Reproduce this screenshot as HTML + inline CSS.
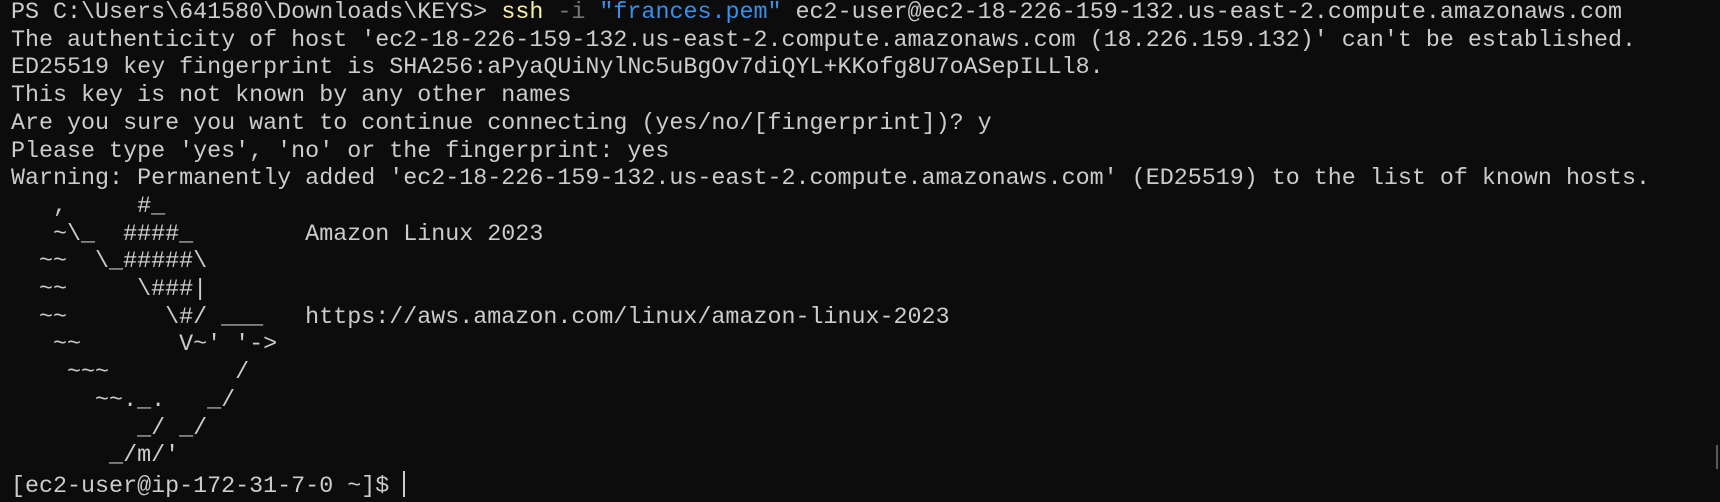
<!DOCTYPE html>
<html><head><meta charset="utf-8"><style>
html,body{margin:0;padding:0;background:#0c0c0c;width:1720px;height:496px;overflow:hidden}
pre{margin:0;position:absolute;left:11px;top:0px;font-family:"Liberation Mono",monospace;font-size:23.35px;line-height:27.7px;color:#cccccc;white-space:pre}
.y{color:#f9f1a5}.g{color:#767676}.b{color:#3b8eea}
.cur{display:inline-block;width:2px;height:26px;background:#cccccc;vertical-align:-5px}
.sb{position:absolute;left:1716px;top:445px;width:2px;height:24px;background:#5a5a5a}
</style></head><body>
<pre>PS C:\Users\641580\Downloads\KEYS&gt; <span class="y">ssh</span> <span class="g">-i</span> <span class="b">"frances.pem"</span> ec2-user@ec2-18-226-159-132.us-east-2.compute.amazonaws.com
The authenticity of host 'ec2-18-226-159-132.us-east-2.compute.amazonaws.com (18.226.159.132)' can't be established.
ED25519 key fingerprint is SHA256:aPyaQUiNylNc5uBgOv7diQYL+KKofg8U7oASepILLl8.
This key is not known by any other names
Are you sure you want to continue connecting (yes/no/[fingerprint])? y
Please type 'yes', 'no' or the fingerprint: yes
Warning: Permanently added 'ec2-18-226-159-132.us-east-2.compute.amazonaws.com' (ED25519) to the list of known hosts.
   ,     #_
   ~\_  ####_        Amazon Linux 2023
  ~~  \_#####\
  ~~     \###|
  ~~       \#/ ___   https://aws.amazon.com/linux/amazon-linux-2023
   ~~       V~' '-&gt;
    ~~~         /
      ~~._.   _/
         _/ _/
       _/m/'
[ec2-user@ip-172-31-7-0 ~]$ <span class="cur"></span></pre>
<div class="sb"></div>
</body></html>
